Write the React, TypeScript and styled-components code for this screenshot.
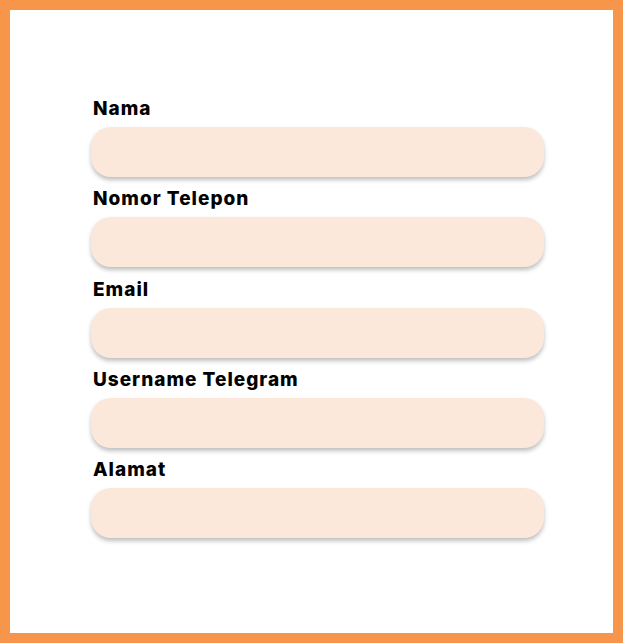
import styled, { createGlobalStyle } from "styled-components";

const GlobalStyle = createGlobalStyle`
	html, body {
		margin: 0;
		padding: 0;
		background: #ffffff;
	}
	* {
		box-sizing: border-box;
	}
`;

const Frame = styled.div`
	width: 623px;
	height: 643px;
	border: 10px solid #f7964a;
	background: #ffffff;
	padding: 87px 0 0 81px;
	font-family: Inter, "Noto Sans", sans-serif;
`;

const Form = styled.form`
	width: 453px;
	display: flex;
	flex-direction: column;
	gap: 10.3px;
`;

const Field = styled.div`
	display: flex;
	flex-direction: column;
	gap: 6px;
`;

const Label = styled.label`
	font-size: 19px;
	line-height: 24px;
	font-weight: 800;
	letter-spacing: 1px;
	color: #000000;
	padding-left: 2px;
`;

const Input = styled.input`
	width: 100%;
	height: 50px;
	border: none;
	outline: none;
	border-radius: 20px;
	background: #fbe8da;
	box-shadow: 0 3px 4px rgba(0, 0, 0, 0.25);
	padding: 0 18px;
	font-family: inherit;
	font-size: 16px;
`;

const fields = [
	{ id: "nama", label: "Nama" },
	{ id: "telepon", label: "Nomor Telepon" },
	{ id: "email", label: "Email" },
	{ id: "telegram", label: "Username Telegram" },
	{ id: "alamat", label: "Alamat" },
];

const App = () => {
	return (
		<>
			<GlobalStyle />
			<Frame>
				<Form onSubmit={(e) => e.preventDefault()}>
					{fields.map((f) => (
						<Field key={f.id}>
							<Label htmlFor={f.id}>{f.label}</Label>
							<Input id={f.id} type="text" />
						</Field>
					))}
				</Form>
			</Frame>
		</>
	);
};

export default App;
